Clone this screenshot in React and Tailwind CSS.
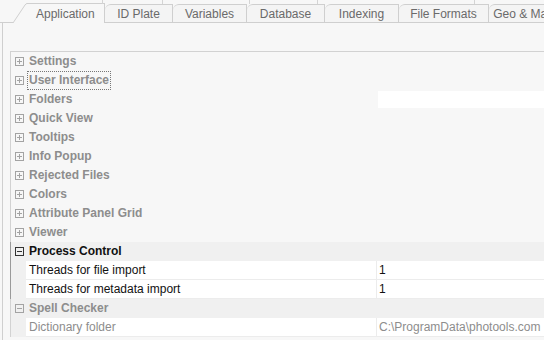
import React from "react";

const CATS = [
  "Settings",
  "User Interface",
  "Folders",
  "Quick View",
  "Tooltips",
  "Info Popup",
  "Rejected Files",
  "Colors",
  "Attribute Panel Grid",
  "Viewer",
];

const TABS = [
  { label: "ID Plate", w: "w-[68px]" },
  { label: "Variables", w: "w-[74px]" },
  { label: "Database", w: "w-[78px]" },
  { label: "Indexing", w: "w-[74px]" },
  { label: "File Formats", w: "w-[90px]" },
  { label: "Geo & Map", w: "w-[70px]" },
];

function Expander({ open, dark }) {
  const c = dark ? "#333333" : "#a3a3a3";
  return (
    <svg width="9" height="9" viewBox="0 0 9 9" className="block">
      <rect x="0.5" y="0.5" width="8" height="8" fill="none" stroke={c} />
      <line x1="2" y1="4.5" x2="7" y2="4.5" stroke={c} />
      {!open && <line x1="4.5" y1="2" x2="4.5" y2="7" stroke={c} />}
    </svg>
  );
}

function CatRow({ label, open, dark, focus, shaded }) {
  return (
    <div className={`flex items-center h-[19px] ${shaded ? "bg-[#f0f0f0]" : ""}`}>
      <div className="w-[15px] shrink-0 flex justify-center pl-[1px]">
        <Expander open={open} dark={dark} />
      </div>
      <span
        className={`ml-[2px] px-[1px] leading-[17px] font-bold ${dark ? "text-[#111]" : "text-[#8d8d8d]"} ${
          focus ? "outline outline-1 outline-dotted outline-[#777]" : ""
        }`}
      >
        {label}
      </span>
    </div>
  );
}

function PropRow({ label, value, muted }) {
  return (
    <div className="flex h-[19px]">
      <div className="w-[15px] shrink-0 bg-[#f0f0f0]" />
      <div className="flex flex-1 min-w-0 bg-white border-b border-[#ececec]">
        <div className={`w-[350px] shrink-0 pl-[3px] leading-[18px] ${muted ? "text-[#8d8d8d]" : "text-[#111]"}`}>{label}</div>
        <div className="w-px shrink-0 bg-[#ececec]" />
        <div className={`flex-1 min-w-0 overflow-hidden pl-[2px] leading-[18px] whitespace-nowrap ${muted ? "text-[#8d8d8d]" : "text-[#111]"}`}>
          {value}
        </div>
      </div>
    </div>
  );
}

export default function App() {
  return (
    <div className="w-[544px] h-[340px] overflow-hidden bg-[#f7f7f7] text-[12px] font-['Liberation_Sans',Arial,sans-serif] relative">
      {/* tab strip */}
      <div className="relative h-[23px] flex items-end">
        <div className="absolute top-0 left-0 right-0 h-[4px] flex">
          <div className="w-[103px] shrink-0 border-r border-[#d4d4d4]" />
          <div className="w-[60px] shrink-0 border-r border-[#d4d4d4]" />
          <div className="w-[87px] shrink-0 border-r border-[#d4d4d4]" />
          <div className="w-[68px] shrink-0 border-r border-[#d4d4d4]" />
          <div className="w-[157px] shrink-0 border-r border-[#d4d4d4]" />
        </div>
        <div className="w-[13px] shrink-0 h-[20px] border-b border-[#cfcfcf]" />
        <div className="flex shrink-0 h-[20px] items-stretch">
          <svg width="14" height="20" viewBox="0 0 14 20" className="block shrink-0">
            <path d="M0 20 L12 2 Q13 0.5 14 0.5" fill="#f7f7f7" stroke="#cfcfcf" />
          </svg>
          <div className="w-[78px] shrink-0 border-t border-r border-[#cfcfcf] text-[#6a6a6a] flex items-center pl-[9px]">
            Application
          </div>
        </div>
        {TABS.map((t) => (
          <div
            key={t.label}
            className={`${t.w} shrink-0 h-[19px] border-t border-r border-b border-[#cfcfcf] rounded-tl-[6px] bg-[#f4f4f4] text-[#6a6a6a] flex items-center justify-center whitespace-nowrap`}
          >
            {t.label}
          </div>
        ))}
      </div>

      {/* panel */}
      <div className="ml-[2px] border-l border-[#cfcfcf] h-[317px] pt-[28px] pl-[7px]">
        <div className="border-t border-l border-[#d2d2d2]">
          {CATS.map((c) => (
            <div key={c} className="relative">
              <CatRow label={c} focus={c === "User Interface"} />
              {c === "Folders" && <div className="absolute left-[367px] right-0 top-[1px] h-[17px] bg-white" />}
            </div>
          ))}
          <div className="border-l border-[#9a9a9a] -ml-px">
            <CatRow label="Process Control" open dark shaded />
            <PropRow label="Threads for file import" value="1" />
            <PropRow label="Threads for metadata import" value="1" />
          </div>
          <CatRow label="Spell Checker" open shaded />
          <PropRow label="Dictionary folder" value="C:\ProgramData\photools.com" muted />
        </div>
      </div>
    </div>
  );
}
